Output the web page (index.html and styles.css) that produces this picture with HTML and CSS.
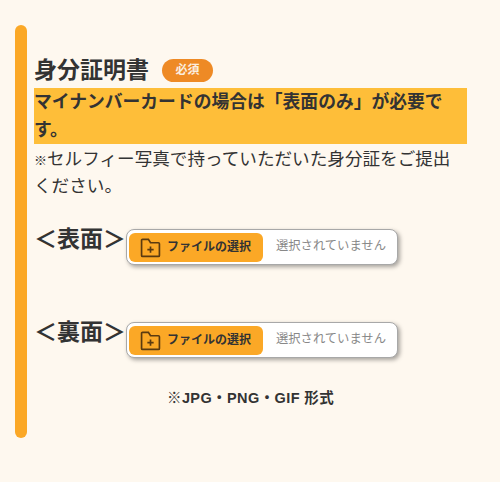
FILE: index.html
```html
<!DOCTYPE html>
<html lang="ja">
<head>
    <meta charset="UTF-8">
    <meta name="viewport" content="width=device-width, initial-scale=1.0">
    <title>身分証明書</title>
    <link rel="stylesheet" href="styles.css">
</head>
<body>

    <section class="upload-section">
        <div class="side-bar"></div>

        <div class="section-body">
            <h2 class="section-title">身分証明書 <span class="required">必須</span></h2>
            <p class="notice">マイナンバーカードの場合は「表面のみ」が必要です。</p>
            <p class="description"><span class="mark">※</span>セルフィー写真で持っていただいた身分証をご提出ください。</p>

            <!-- 表面 -->
            <div class="upload-row">
                <span class="upload-label">＜表面＞</span>
                <div class="file-box">
                    <span class="file-button">
                        <svg class="folder-icon" viewBox="0 0 20 20" fill="none" stroke="#5a3a10" stroke-width="1.6">
                            <path d="M1.5 3.2 V17.5 a1 1 0 0 0 1 1 H17.5 a1 1 0 0 0 1 -1 V6.5 a1 1 0 0 0 -1 -1 H10 L8 2.2 H2.5 a1 1 0 0 0 -1 1 Z"/>
                            <path d="M10 9 V15 M7 12 H13"/>
                        </svg>
                        <span class="file-button-text">ファイルの選択</span>
                    </span>
                    <span class="file-status">選択されていません</span>
                </div>
            </div>

            <!-- 裏面 -->
            <div class="upload-row">
                <span class="upload-label">＜裏面＞</span>
                <div class="file-box">
                    <span class="file-button">
                        <svg class="folder-icon" viewBox="0 0 20 20" fill="none" stroke="#5a3a10" stroke-width="1.6">
                            <path d="M1.5 3.2 V17.5 a1 1 0 0 0 1 1 H17.5 a1 1 0 0 0 1 -1 V6.5 a1 1 0 0 0 -1 -1 H10 L8 2.2 H2.5 a1 1 0 0 0 -1 1 Z"/>
                            <path d="M10 9 V15 M7 12 H13"/>
                        </svg>
                        <span class="file-button-text">ファイルの選択</span>
                    </span>
                    <span class="file-status">選択されていません</span>
                </div>
            </div>

            <p class="format-note">※JPG・PNG・GIF 形式</p>
        </div>
    </section>

</body>
</html>
```

FILE: styles.css
```css
body {
    font-family: "Liberation Sans", "Noto Sans CJK JP", sans-serif;
    background-color: #fef8ef;
    color: #333;
    margin: 0;
    padding: 25px 33px 0 15px;
}
.upload-section {
    display: flex;
    gap: 7px;
    height: 413px;
}
.side-bar {
    width: 12px;
    flex-shrink: 0;
    background-color: #fba826;
    border-radius: 6px;
}
.section-body {
    flex: 1;
    padding-top: 26px;
}
.section-title {
    display: flex;
    align-items: center;
    gap: 13px;
    margin: 0;
    height: 37px;
    font-size: 23px;
    font-weight: 700;
    line-height: 36px;
}
.required {
    width: 51px;
    height: 23px;
    margin-top: 2px;
    border-radius: 12px;
    background-color: #ee8a25;
    color: #fbeee0;
    font-size: 12px;
    line-height: 23px;
    text-align: center;
}
.notice {
    margin: 0;
    background-color: #febe39;
    font-size: 17.8px;
    font-weight: 700;
    line-height: 28px;
}
.description {
    margin: 2px 0 0;
    padding-right: 12px;
    font-size: 17.6px;
    line-height: 27px;
}
.mark {
    font-size: 13px;
    line-height: 1;
}
.upload-row {
    display: flex;
    align-items: flex-start;
    margin-top: 21px;
    height: 67px;
}
.upload-row + .upload-row {
    margin-top: 26px;
}
.upload-label {
    margin-top: 2px;
    font-size: 23px;
    font-weight: 700;
    line-height: 32px;
    white-space: nowrap;
}
.file-box {
    display: flex;
    align-items: center;
    margin-top: 8px;
    width: 272px;
    height: 36px;
    box-sizing: border-box;
    padding-left: 2px;
    background-color: #fff;
    border: 1px solid #a8a8a8;
    border-radius: 8px;
    box-shadow: 2px 2px 4px rgba(0, 0, 0, 0.35);
}
.file-button {
    display: flex;
    align-items: center;
    gap: 6px;
    width: 134px;
    height: 29px;
    box-sizing: border-box;
    padding-left: 11px;
    background-color: #fba826;
    border-radius: 6px;
    font-size: 12px;
    font-weight: 700;
    white-space: nowrap;
}
.file-button-text {
    margin-bottom: 4px;
}
.folder-icon {
    width: 21px;
    height: 21px;
    flex-shrink: 0;
}
.file-status {
    margin: 0 0 4px 13px;
    color: #888;
    font-size: 12.3px;
    white-space: nowrap;
}
.format-note {
    margin: 7px 0 0;
    padding-left: 133px;
    font-size: 14.5px;
    font-weight: 700;
    letter-spacing: 0.4px;
    line-height: 20px;
}
```
